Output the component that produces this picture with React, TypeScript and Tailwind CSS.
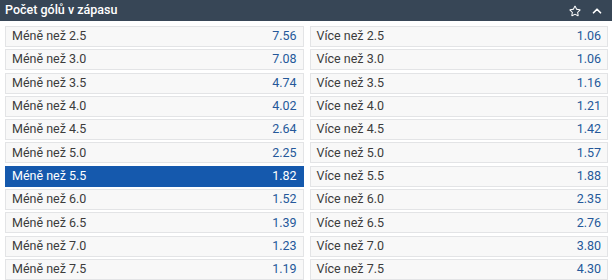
import {FaRegStar} from 'react-icons/fa';
import {FiChevronUp} from 'react-icons/fi';

const rows = [
  ['2.5', '7.56', '1.06'],
  ['3.0', '7.08', '1.06'],
  ['3.5', '4.74', '1.16'],
  ['4.0', '4.02', '1.21'],
  ['4.5', '2.64', '1.42'],
  ['5.0', '2.25', '1.57'],
  ['5.5', '1.82', '1.88'],
  ['6.0', '1.52', '2.35'],
  ['6.5', '1.39', '2.76'],
  ['7.0', '1.23', '3.80'],
  ['7.5', '1.19', '4.30'],
];

function Cell({label, odd, active}: {label: string; odd: string; active?: boolean}) {
  return (
    <div
      className={
        active
          ? 'h-[21px] flex items-center justify-between px-[6px] bg-[#1559ad] border border-[#1559ad] text-white'
          : 'h-[21px] flex items-center justify-between px-[6px] bg-[#f8f8f8] border border-[#e3e4e6] text-[#3c3c3c]'
      }
    >
      <span className="text-[12.5px]">{label}</span>
      <span className={active ? 'text-[12.5px] text-white' : 'text-[12.5px] text-[#25589a]'}>{odd}</span>
    </div>
  );
}

export default function App() {
  const cells = rows.flatMap(([n, a, b]) => [
    <Cell key={'l' + n} label={'Méně než ' + n} odd={a} active={n === '5.5'} />,
    <Cell key={'r' + n} label={'Více než ' + n} odd={b} />,
  ]);
  return (
    <div className="w-[612px] h-[280px] bg-white overflow-hidden" style={{fontFamily: 'Roboto, "Liberation Sans", sans-serif'}}>
      <div className="h-[21px] bg-[#374656] flex items-center justify-between pl-[5px] pr-[8px]">
        <span className="text-white text-[12.5px] font-medium">Počet gólů v zápasu</span>
        <div className="flex items-center gap-[9px] text-white">
          <FaRegStar className="text-[12px]" />
          <FiChevronUp className="text-[14px]" strokeWidth={3} />
        </div>
      </div>
      <div className="grid grid-cols-2 gap-x-[6px] gap-y-[2.3px] pl-[5px] pr-[4px] pt-[5px]">
        {cells}
      </div>
    </div>
  );
}
